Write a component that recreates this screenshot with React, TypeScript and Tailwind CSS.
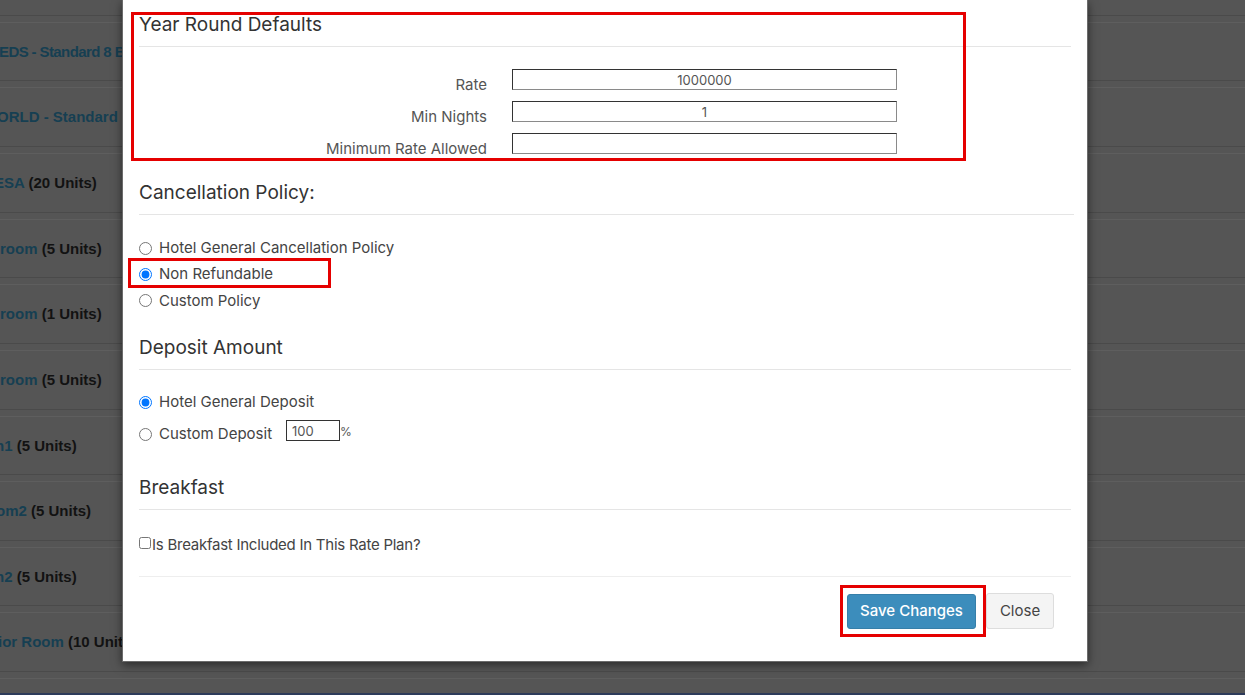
import React from "react";

type RoomRow = {
  h: string;
  name: string;
  units?: string;
  shift: string;
};

const rooms: RoomRow[] = [
  { h: "h-[65px]", name: "EDS - Standard 8 Beds", units: "(8 Units)", shift: "-ml-[1px] tracking-[-0.6px]" },
  { h: "h-[66px]", name: "ORLD - Standard Twin", units: "(4 Units)", shift: "-ml-[3px]" },
  { h: "h-[66px]", name: "ESA", units: "(20 Units)", shift: "-ml-[6px]" },
  { h: "h-[65px]", name: "room", units: "(5 Units)", shift: "ml-0" },
  { h: "h-[66px]", name: "room", units: "(1 Units)", shift: "ml-0" },
  { h: "h-[66px]", name: "room", units: "(5 Units)", shift: "ml-0" },
  { h: "h-[65px]", name: "n1", units: "(5 Units)", shift: "-ml-[5px]" },
  { h: "h-[66px]", name: "om2", units: "(5 Units)", shift: "-ml-[4px]" },
  { h: "h-[65px]", name: "n2", units: "(5 Units)", shift: "-ml-[5px]" },
  { h: "h-[66px]", name: "ior Room", units: "(10 Units)", shift: "-ml-[2px]" },
];

const RoomList = () => (
  <div className="flex flex-col font-['Liberation_Sans',Arial,sans-serif] text-[15px] font-bold">
    <div className="h-[16px] border-b border-[#4a4a4a]" />
    <div className="h-[6px]" />
    {rooms.map((r, i) => (
      <div key={i} className={`${r.h} flex flex-col`}>
        <div className="flex flex-1 items-center border-t border-b border-t-[#5e5e5e] border-b-[#4a4a4a] pt-[1px]">
          <span className={`${r.shift} whitespace-nowrap`}>
            <span className="text-[#163f52]">{r.name}</span>{" "}
            <span className="text-[#121212]">{r.units}</span>
          </span>
        </div>
        <div className="h-[6px]" />
      </div>
    ))}
    <div className="h-[15px] border-t border-[#5e5e5e]" />
    <div className="h-[2px] bg-[#2d3b5a]" />
  </div>
);

type FieldProps = { label: string; value?: string };

const RateField = ({ label, value }: FieldProps) => (
  <div className="flex h-[32px] items-start">
    <div className="mt-[6px] w-[349px] pr-[1px] text-right text-[15px] leading-[20px] text-[#555]">
      {label}
    </div>
    <input
      readOnly
      defaultValue={value}
      className="ml-[24px] h-[21px] w-[385px] border border-[#8a8a8a] border-l-[#333] border-t-[#333] bg-white text-center text-[13px] leading-[19px] text-[#555] outline-none"
    />
  </div>
);

const SectionTitle = ({ children, className }: { children: React.ReactNode; className: string }) => (
  <div className={className}>
    <h4 className="text-[19px] leading-[24px] text-[#333]">{children}</h4>
    <div className="mt-[9px] border-t border-[#e5e5e5]" />
  </div>
);

const Radio = ({ label, checked, name, h }: { label: string; checked?: boolean; name: string; h: string }) => (
  <label className={`flex ${h} items-center`}>
    <input type="radio" name={name} defaultChecked={checked} className="m-0 h-[13px] w-[13px]" />
    <span className="ml-[7px] text-[15px] leading-[26px] text-[#444]">{label}</span>
  </label>
);

export default function App() {
  return (
    <div className="relative h-[695px] w-[1245px] overflow-hidden bg-[#555555]">
      <RoomList />

      {/* rate plan modal */}
      <div className="absolute left-[122px] top-0 flex h-[662px] w-[966px] flex-col border-x border-b border-[#6b6b6b] bg-white px-[16px] font-['Inter',sans-serif] shadow-[0_3px_9px_rgba(0,0,0,0.5)]">
        <SectionTitle className="mt-[13px]">Year Round Defaults</SectionTitle>

        <div className="mt-[22px] flex flex-col">
          <RateField label="Rate" value="1000000" />
          <RateField label="Min Nights" value="1" />
          <RateField label="Minimum Rate Allowed" value="" />
        </div>

        <SectionTitle className="mt-[16px] -mr-[3px]">Cancellation Policy:</SectionTitle>
        <div className="mt-[20px] flex flex-col">
          <Radio name="cancel" h="h-[26px]" label="Hotel General Cancellation Policy" />
          <Radio name="cancel" h="h-[26px]" label="Non Refundable" checked />
          <Radio name="cancel" h="h-[27px]" label="Custom Policy" />
        </div>

        <SectionTitle className="mt-[22px]">Deposit Amount</SectionTitle>
        <div className="mt-[19px] flex flex-col">
          <Radio name="deposit" h="h-[26px]" label="Hotel General Deposit" checked />
          <div className="mt-[3px] flex h-[32px] items-center">
            <input type="radio" name="deposit" className="m-0 h-[13px] w-[13px]" />
            <span className="ml-[7px] text-[15px] leading-[26px] text-[#444]">Custom Deposit</span>
            <input
              readOnly
              defaultValue="100"
              className="ml-[14px] mt-[2px] h-[21px] w-[54px] self-start border border-[#333] bg-white pl-[5px] text-[13px] leading-[15px] text-[#555] outline-none"
            />
            <span className="mt-[5px] self-start text-[12px] leading-[18px] text-[#555]">%</span>
          </div>
        </div>

        <SectionTitle className="mt-[26px]">Breakfast</SectionTitle>
        <label className="mt-[25px] flex items-start">
          <input type="checkbox" className="m-0 mt-[2px] h-[12px] w-[12px]" />
          <span className="ml-[1px] text-[15px] leading-[20px] tracking-[-0.25px] text-[#444]">
            Is Breakfast Included In This Rate Plan?
          </span>
        </label>

        <div className="mt-[21px] border-t border-[#eeeeee]" />
        <div className="mt-[16px] flex items-start justify-end gap-[10px] pr-[17px]">
          <button className="mt-[1px] h-[35px] w-[129px] rounded-[3px] border border-[#367fa9] bg-[#3c8dbc] text-[15px] font-medium text-white">
            Save Changes
          </button>
          <button className="h-[36px] w-[68px] rounded-[3px] border border-[#dddddd] bg-[#f4f4f4] text-[15px] text-[#444]">
            Close
          </button>
        </div>
      </div>

      {/* review markers */}
      <div className="absolute left-[131px] top-[12px] h-[149px] w-[835px] border-[3px] border-[#e50000]" />
      <div className="absolute left-[128px] top-[258px] h-[30px] w-[203px] border-[3px] border-[#e50000]" />
      <div className="absolute left-[840px] top-[585px] h-[52px] w-[146px] border-[3px] border-[#e50000]" />
    </div>
  );
}
